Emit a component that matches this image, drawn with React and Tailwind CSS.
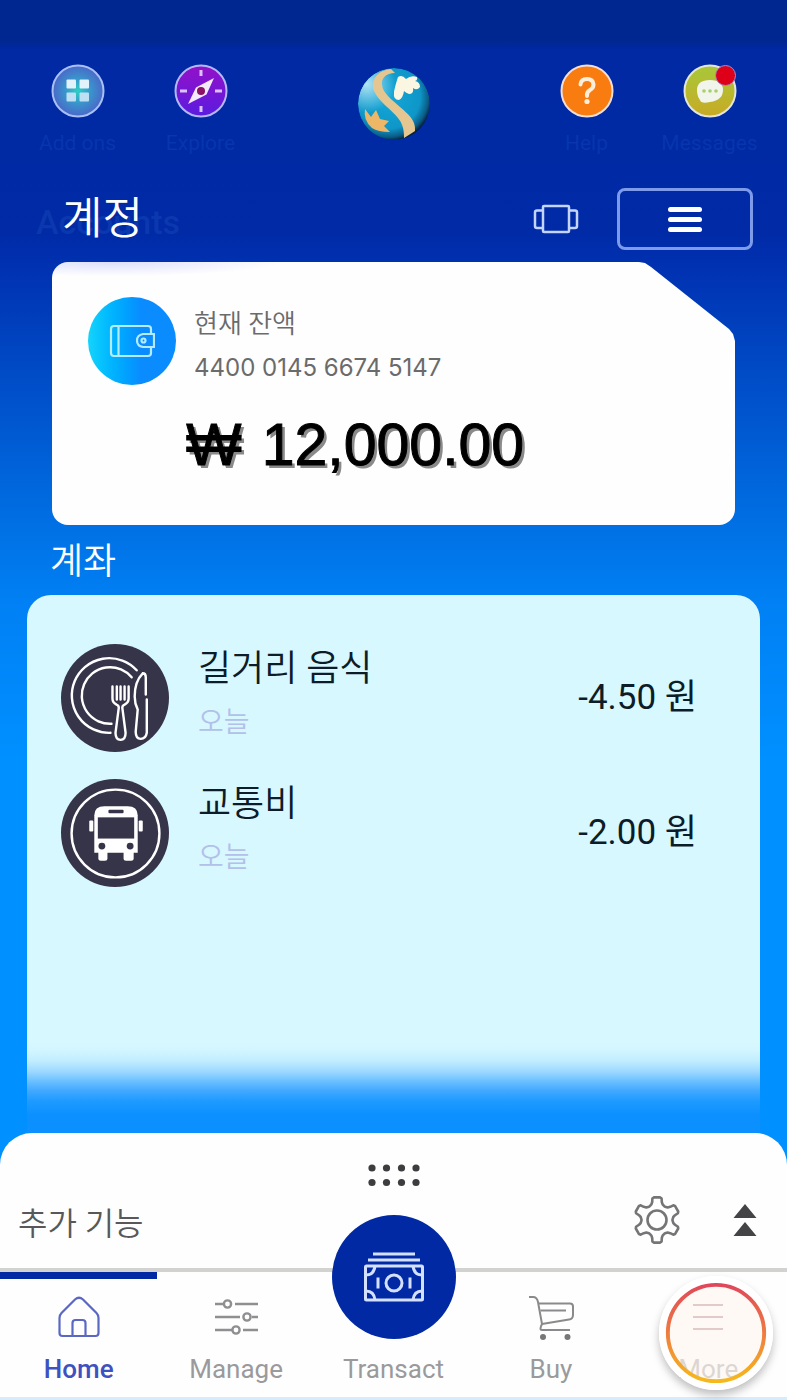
import React, { useState } from 'react';

const transactions = [
  { id: 1, title: '길거리 음식', date: '오늘', amount: '-4.50 원', Icon: FoodIcon },
  { id: 2, title: '교통비', date: '오늘', amount: '-2.00 원', Icon: BusIcon },
];

const tabs = [
  { id: 'home', label: 'Home', Icon: HomeIcon },
  { id: 'manage', label: 'Manage', Icon: SlidersIcon },
  { id: 'transact', label: 'Transact', Icon: null },
  { id: 'buy', label: 'Buy', Icon: CartIcon },
  { id: 'more', label: 'More', Icon: LinesIcon },
];

// One gear tooth plus the valley after it, repeated every 60 degrees
const toothProfile = [[-7.5, -13.6], [-5.6, -15.6], [-4.8, -18], [-4.6, -21.5], [-3.2, -22.6], [3.2, -22.6], [4.6, -21.5], [4.8, -18], [5.6, -15.6], [7.5, -13.6]];
const gearPoints = [0, 60, 120, 180, 240, 300]
  .flatMap((deg) => {
    const a = (deg * Math.PI) / 180;
    return toothProfile.map(([x, y]) => {
      const px = 24 + x * Math.cos(a) - y * Math.sin(a);
      const py = 24 + x * Math.sin(a) + y * Math.cos(a);
      return `${px.toFixed(1)},${py.toFixed(1)}`;
    });
  })
  .join(' ');

function AddIcon() {
  return (
    <svg viewBox="0 0 54 54" className="w-[54px] h-[54px]">
      <defs>
        <radialGradient id="add-bg" cx="0.5" cy="0.5" r="0.5">
          <stop offset="0" stopColor="#2cd0c4" />
          <stop offset="0.5" stopColor="#3a94cc" />
          <stop offset="1" stopColor="#4a68c8" />
        </radialGradient>
      </defs>
      <circle cx="27" cy="27" r="25.5" fill="url(#add-bg)" stroke="#a9c0f4" strokeWidth="2" />
      <g fill="#e2f2fb">
        <rect x="15.5" y="15.5" width="9.5" height="9" rx="1" />
        <rect x="28.5" y="15.5" width="9.5" height="9" rx="1" />
        <rect x="15.5" y="28.5" width="9.5" height="9" rx="1" fill="#bfe0f2" />
        <rect x="28.5" y="28.5" width="9.5" height="9" rx="1" fill="#bfe0f2" />
      </g>
    </svg>
  );
}

function CompassIcon() {
  return (
    <svg viewBox="0 0 54 54" className="w-[54px] h-[54px]">
      <defs>
        <linearGradient id="compass-bg" x1="0" y1="0" x2="0" y2="1">
          <stop offset="0" stopColor="#9410c8" />
          <stop offset="1" stopColor="#5a1ce0" />
        </linearGradient>
      </defs>
      <circle cx="27" cy="27" r="25.5" fill="url(#compass-bg)" stroke="#b4b8f8" strokeWidth="2" />
      <g stroke="#d9c2f8" strokeWidth="3">
        <path d="M27 6v6M27 42v6M6 27h7M41 27h7" />
      </g>
      <path d="M40 14 32.5 30.5 14 40 22 23.5Z" fill="#f3e9f8" />
      <circle cx="27" cy="27" r="4" fill="#8b1264" />
    </svg>
  );
}

function HelpIcon() {
  return (
    <svg viewBox="0 0 54 54" className="w-[54px] h-[54px]">
      <circle cx="27" cy="27" r="25.5" fill="#f97c10" stroke="#f3dfd8" strokeWidth="2" />
      <path d="M20.5 20.5Q21 15 27 15t6.500 5.500Q33.500 24 30 26t-3 6" fill="none" stroke="#fdeedc" strokeWidth="4" strokeLinecap="round" />
      <circle cx="27" cy="37.500" r="2.600" fill="#fdeedc" />
    </svg>
  );
}

function MessageIcon() {
  return (
    <svg viewBox="0 0 54 54" className="w-[54px] h-[54px] overflow-visible">
      <defs>
        <linearGradient id="message-bg" x1="0" y1="0" x2="0" y2="1">
          <stop offset="0" stopColor="#a8c83a" />
          <stop offset="1" stopColor="#c8aa24" />
        </linearGradient>
      </defs>
      <circle cx="27" cy="27" r="25.5" fill="url(#message-bg)" stroke="#e4e6dc" strokeWidth="2" />
      <path d="M14 26q0-10 13-10t13 10-13 12q-9 2-10-2-3-4-3-10Z" fill="#f1f5ec" />
      <g fill="#a9cf6c">
        <circle cx="21" cy="27" r="1.8" />
        <circle cx="27" cy="27" r="1.8" />
        <circle cx="33" cy="27" r="1.8" />
      </g>
      <circle cx="42.500" cy="11.500" r="10" fill="#de0018" stroke="#a48cd0" strokeWidth="1" />
    </svg>
  );
}

function Logo() {
  return (
    <svg viewBox="0 0 72 72" className="w-[72px] h-[72px]" role="img" aria-label="Logo">
      <defs>
        <radialGradient id="globe" cx="0.42" cy="0.4" r="0.62">
          <stop offset="0" stopColor="#14a8d8" />
          <stop offset="0.72" stopColor="#0e96c8" />
          <stop offset="0.9" stopColor="#0b5c86" />
          <stop offset="1" stopColor="#041c38" />
        </radialGradient>
        <radialGradient id="shine" cx="0.12" cy="0.22" r="0.4">
          <stop offset="0" stopColor="#c4ecfa" stopOpacity="0.9" />
          <stop offset="1" stopColor="#c4ecfa" stopOpacity="0" />
        </radialGradient>
        <clipPath id="globe-clip">
          <circle cx="36" cy="36" r="36" />
        </clipPath>
      </defs>
      <g clipPath="url(#globe-clip)">
        <circle cx="36" cy="36" r="36" fill="url(#globe)" />
        <circle cx="36" cy="36" r="36" fill="url(#shine)" />
        <path d="M33 1C20 2 12 12 16 23c5 11 18 19 24 27 4 5 6 10 6 20l11-7c1-11-7-17-15-24-9-8-17-14-18-22-1-7 4-12 13-12Z" fill="#e6c690" />
        <path d="M40 9q4-3 8 2 5-4 11-2 1 3-2 4 5 1 5 6-3 4-7 1 1 6-4 6-3-1-5-3-1 7-5 9-6 0-5-8 1-6 4-15Z" fill="#fbf6e2" />
        <path d="M7 41l6 8 5-7 4 9 9 2-5 5 6 6q-12 0-18-4Q5 52 7 41Z" fill="#eeb768" />
      </g>
    </svg>
  );
}

function CarouselIcon() {
  return (
    <svg viewBox="0 0 46 30" className="w-[46px] h-[30px]" fill="none" stroke="#c3d4ff" strokeWidth="2.5">
      <rect x="10" y="2" width="26" height="26" rx="1" />
      <path d="M10 6.500H4q-2 0-2 2V22q0 2 2 2h6M36 6.500h6q2 0 2 2V22q0 2-2 2h-6" />
    </svg>
  );
}

function WalletIcon() {
  return (
    <svg viewBox="0 0 46 34" className="w-[46px] h-[34px]" fill="none" stroke="#b4ecff" strokeWidth="2.2">
      <path d="M42 10V5q0-3-3-3H5Q2 2 2 5v24q0 3 3 3h34q3 0 3-3v-5" />
      <path d="M9.500 2v30" />
      <path d="M45 10H34q-6 1-6 6.500T34 23h11Z" />
      <circle cx="34.500" cy="16.500" r="2" />
    </svg>
  );
}

function FoodIcon() {
  return (
    <svg viewBox="0 0 107 107" className="w-[108px] h-[108px]" fill="none" stroke="#fff" strokeWidth="2.4" strokeLinecap="round">
      <circle cx="53.500" cy="53.500" r="53.500" fill="#363449" stroke="none" />
      <path d="M75 26A37 37 0 1 0 49 88" />
      <path d="M70 33A28 28 0 1 0 50 79" />
      <path d="M51 42v12q0 4 4 6 3 1 2 5l-3 23q0 7 5 7t5-7l-3-23q-1-4 2-5 4-2 4-6V42M55.300 42v13M59 42v13M63 42v13" />
      <path d="M84 50V33q0-4-3-4-8 8-8 23 0 7 3 13l-2 22q0 7 5 7t6-6V55" />
    </svg>
  );
}

function BusIcon() {
  return (
    <svg viewBox="0 0 107 107" className="w-[108px] h-[108px]">
      <circle cx="53.500" cy="53.500" r="53.500" fill="#363449" />
      <circle cx="54" cy="54" r="43.500" fill="none" stroke="#fff" strokeWidth="2.400" />
      <g fill="#fff">
        <path d="M33 36q0-9 10-9h23q10 0 10 9v37H33Z" />
        <rect x="28" y="41" width="4" height="11" rx="1" />
        <rect x="77" y="41" width="4" height="11" rx="1" />
        <rect x="37" y="70" width="9" height="11" rx="2.500" />
        <rect x="62" y="70" width="10" height="11" rx="2.500" />
      </g>
      <g fill="#363449">
        <rect x="47" y="30.500" width="15" height="3.500" rx="1" />
        <rect x="36.500" y="38" width="36" height="21" />
        <circle cx="40.500" cy="66.500" r="3.400" />
        <circle cx="68.500" cy="66.500" r="3.400" />
      </g>
    </svg>
  );
}

function DotsIcon() {
  return (
    <svg viewBox="0 0 54 24" className="w-[54px] h-6" fill="#3d3d3f">
      {[5, 19.5, 34.5, 49].map((x) => (
        <g key={x}>
          <circle cx={x} cy="5" r="3.600" />
          <circle cx={x} cy="19.500" r="3.600" />
        </g>
      ))}
    </svg>
  );
}

function GearIcon() {
  return (
    <svg viewBox="0 0 48 48" className="w-12 h-12" fill="none" stroke="#757577" strokeWidth="2.600" strokeLinejoin="round">
      <polygon points={gearPoints} />
      <circle cx="24" cy="24" r="9.500" />
    </svg>
  );
}

function ExpandIcon() {
  return (
    <svg viewBox="0 0 24 32" className="w-6 h-8" fill="#444446">
      <path d="M12 0 23.500 14H.500ZM12 18l11.500 14H.500Z" />
    </svg>
  );
}

function HomeIcon() {
  return (
    <svg viewBox="0 0 44 44" className="w-11 h-11" fill="none" stroke="#5a68c4" strokeWidth="2.200" strokeLinejoin="round">
      <path d="M2.500 23q0-3 2-5L18 4.500q4-3.500 8 0L39.500 18q2 2 2 5v15q0 3-3 3h-33q-3 0-3-3Z" />
      <path d="M15.500 41V28q0-3 3-3h7q3 0 3 3v13" />
    </svg>
  );
}

function SlidersIcon() {
  return (
    <svg viewBox="0 0 44 44" className="w-11 h-11" fill="none" stroke="#8f8f91" strokeWidth="2.400">
      <path d="M1 9h8M21 9h23M1 22h25M38 22h6M1 35h17M29 35h15" />
      <circle cx="13.500" cy="9" r="3.600" />
      <circle cx="33" cy="22" r="3.600" />
      <circle cx="22" cy="35" r="3.600" />
    </svg>
  );
}

function CartIcon() {
  return (
    <svg viewBox="0 0 46 46" className="w-[46px] h-[46px]" fill="none" stroke="#8a8a8c" strokeWidth="2">
      <path d="M1 2h4q4 0 5 5l4 22q-3 6 0 6h28" />
      <path d="M10.500 8.500H42q3 0 3 3V20q0 4-4 4.500L14 29M12.500 15.500H38" />
      <circle cx="15" cy="42" r="3" fill="#77777a" stroke="none" />
      <circle cx="39.500" cy="42" r="3" fill="#77777a" stroke="none" />
    </svg>
  );
}

function LinesIcon() {
  return (
    <svg viewBox="0 0 44 44" className="w-11 h-11" stroke="#a8787c" strokeWidth="2">
      <path d="M7 10h30M7 22h30M7 34h30" />
    </svg>
  );
}

function CashIcon() {
  return (
    <svg viewBox="0 0 60 50" className="w-[60px] h-[50px]" fill="none" stroke="#d4e0ff" strokeWidth="3">
      <path d="M9 2h42M4 8h52" />
      <rect x="1.500" y="14" width="57" height="34" rx="1" />
      <circle cx="30" cy="31" r="8" />
      <path d="M14 25.500v11M46 25.500v11M2 23q8 0 9-9M58 23q-8 0-9-9M2 39q8 0 9 9M58 39q-8 0-9 9" />
    </svg>
  );
}

function HeaderAction({ label, children }) {
  return (
    <button className="w-[123px] flex flex-col items-center">
      {children}
      <span className="mt-3 text-[21px] leading-[26px] text-[#0736ad]">{label}</span>
    </button>
  );
}

export default function App() {
  const [active, setActive] = useState('home');

  return (
    <div className="min-h-screen flex flex-col bg-[linear-gradient(180deg,#00278f_0px,#00278f_40px,#0029a3_50px,#002aa6_230px,#0032b2_270px,#0070e4_525px,#0080f4_600px,#0090ff_760px,#0090ff_100%)] font-['Roboto','Noto_Sans_CJK_KR',sans-serif]">
      {/* Shortcuts */}
      <header className="flex items-start justify-between px-4 pt-16">
        <div className="flex">
          <HeaderAction label="Add ons"><AddIcon /></HeaderAction>
          <HeaderAction label="Explore"><CompassIcon /></HeaderAction>
        </div>
        <div className="pt-1">
          <Logo />
        </div>
        <div className="flex">
          <HeaderAction label="Help"><HelpIcon /></HeaderAction>
          <HeaderAction label="Messages"><MessageIcon /></HeaderAction>
        </div>
      </header>

      <main className="grow flex flex-col">
        <div className="relative mt-8 pl-[62px] pr-[34px] flex items-center">
          <span className="absolute left-9 top-3 text-[34px] leading-[44px] font-medium text-[#0b38ae]">Accounts</span>
          <h1 className="relative grow text-[44px] leading-[60px] font-[350] text-white">계정</h1>
          <button aria-label="Card view" className="mr-[38px]">
            <CarouselIcon />
          </button>
          <button aria-label="List view" className="w-[136px] h-[62px] rounded-lg border-[3px] border-[#7d9bea] flex flex-col items-center justify-center gap-[5px]">
            <span className="w-[34px] h-[5px] rounded-full bg-white" />
            <span className="w-[34px] h-[5px] rounded-full bg-white" />
            <span className="w-[34px] h-[5px] rounded-full bg-white" />
          </button>
        </div>

        {/* Balance card */}
        <section className="mt-3 mx-[52px] pt-[35px] pl-9 pb-[50px] rounded-2xl bg-[#fefefe] bg-[radial-gradient(ellipse_170px_14px_at_60px_0px,#dcdffc,transparent)] [clip-path:polygon(0_0,calc(100%-96px)_0,calc(100%-90px)_1px,calc(100%-84px)_5px,calc(100%-6px)_67px,calc(100%-2px)_72px,100%_79px,100%_100%,0_100%)]">
          <div className="flex gap-[18px]">
            <div className="w-[88px] h-[88px] rounded-full bg-linear-to-r from-[#14d4fc] to-[#0a8cff] to-60% flex items-center justify-center">
              <WalletIcon />
            </div>
            <div className="pt-[5px] text-[#6b6b6b]">
              <p className="text-[26px] leading-[44px] font-[350]">현재 잔액</p>
              <p className="text-[24px] leading-[44px] font-['Inter',sans-serif]">4400 0145 6674 5147</p>
            </div>
          </div>
          <p className="mt-[25px] pl-[98px] flex gap-5 text-[59px] leading-[60px] text-black font-['Liberation_Sans',sans-serif] [-webkit-text-stroke:1px_black] [text-shadow:3px_3px_0_#8a8a8a]">
            <span>₩</span>
            <span>12,000.00</span>
          </p>
        </section>

        {/* Transactions */}
        <h2 className="pt-1 pl-[50px] text-[36px] leading-[66px] font-[350] text-white">계좌</h2>
        <section className="grow mx-[27px] pt-[35px] rounded-t-3xl bg-[#d8f8ff] flex flex-col">
          <ul>
            {transactions.map((t) => (
              <li key={t.id} className="h-[135px] pl-[34px] pr-[63px] flex items-center">
                <t.Icon />
                <div className="grow pl-[29px] pb-1">
                  <p className="text-[36px] leading-[54px] font-[350] text-[#0c1c28]">{t.title}</p>
                  <p className="text-[28px] leading-[54px] font-[350] text-[#b2c0ea]">{t.date}</p>
                </div>
                <p className="text-[35px] leading-[54px] text-[#0c1c28]">{t.amount}</p>
              </li>
            ))}
          </ul>
          <div className="mt-auto h-[92px] bg-[linear-gradient(180deg,#d8f8ff_0px,#d2f5ff_10px,#c0edff_20px,#9fd9ff_30px,#6cc0ff_40px,#40a8ff_50px,#1e9bff_60px,#0c90ff_74px)]" />
        </section>
      </main>

      {/* Bottom sheet */}
      <footer className="rounded-t-[32px] bg-[#fefefe] border-b-[3px] border-[#d6ecfa]">
        <div className="pt-[30px] flex justify-center">
          <button aria-label="Drag handle"><DotsIcon /></button>
        </div>
        <div className="h-[81px] pl-[18px] pr-[30px] pb-4 flex items-center">
          <span className="grow pt-2 text-[32px] leading-[58px] font-[350] text-[#58585a]">추가 기능</span>
          <button aria-label="Settings"><GearIcon /></button>
          <button aria-label="Expand" className="ml-[52px]"><ExpandIcon /></button>
        </div>
        <nav className="relative grid grid-cols-5 border-t-4 border-[#d2d2d0]">
          {tabs.map(({ id, label, Icon }) => (
            <button
              key={id}
              onClick={() => setActive(id)}
              className={
                active === id
                  ? 'h-[125px] flex flex-col items-center border-t-[7px] border-[#0029a3] pt-4 text-[26px] leading-9 font-medium text-[#3f51c0]'
                  : 'h-[125px] flex flex-col items-center border-t-[7px] border-transparent pt-4 text-[26px] leading-9 text-[#9a9a9c]'
              }
            >
              <span className="h-14 flex items-start">{Icon && <Icon />}</span>
              {label}
            </button>
          ))}
          <button aria-label="Transact" className="absolute left-1/2 -top-[57px] -translate-x-1/2 w-[124px] h-[124px] rounded-full bg-[#0029a3] flex items-center justify-center">
            <CashIcon />
          </button>
          {/* Floating assist ring over the last tab */}
          <div className="absolute right-[14px] top-1 w-[114px] h-[114px] rounded-full pointer-events-none shadow-[0_5px_8px_rgba(0,0,0,0.25)]">
            <svg viewBox="0 0 116 116" className="w-full h-full">
              <defs>
                <linearGradient id="ring" x1="0" y1="0" x2="0" y2="1">
                  <stop offset="0" stopColor="#e0485a" />
                  <stop offset="0.5" stopColor="#ee7c40" />
                  <stop offset="1" stopColor="#f6b91c" />
                </linearGradient>
              </defs>
              <circle cx="58" cy="58" r="54" fill="none" stroke="#fff" strokeWidth="8" />
              <circle cx="58" cy="58" r="49" fill="#fff6f0" fillOpacity="0.65" stroke="url(#ring)" strokeWidth="4" />
            </svg>
          </div>
        </nav>
      </footer>
    </div>
  );
}
